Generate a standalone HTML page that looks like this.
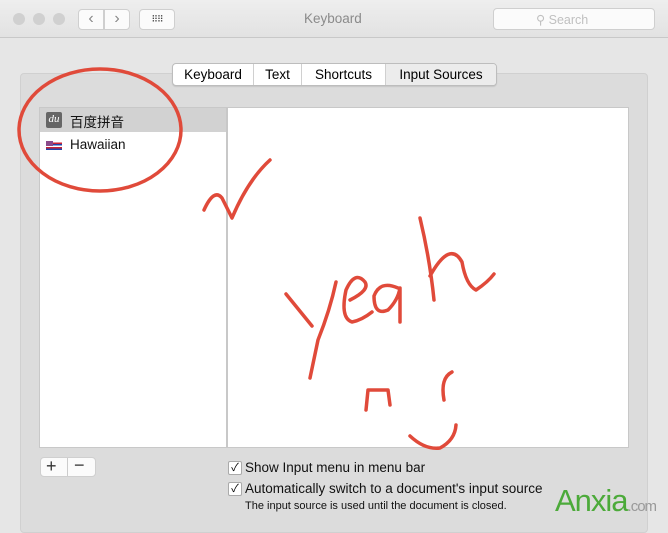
<!DOCTYPE html>
<html><head><meta charset="utf-8"><style>
body{margin:0;width:668px;height:521px;overflow:hidden;background:#e6e6e6;font-family:"Liberation Sans","Noto Sans CJK SC",sans-serif;position:relative}
.tb{position:absolute;left:0;top:0;width:668px;height:37px;background:linear-gradient(#eeeeee,#e2e2e2);border-bottom:1px solid #c8c8c8}
.dot{position:absolute;top:13px;width:12px;height:12px;border-radius:50%;background:#d0d0d0}
.btn{position:absolute;background:#fbfbfb;border:1px solid #cfcfcf;border-radius:4px;box-sizing:border-box}
.panel{position:absolute;left:20px;top:73px;width:628px;height:460px;background:#dcdcdc;border:1px solid #d0d0d0;border-radius:4px;box-sizing:border-box}
.tabs{position:absolute;left:172px;top:63px;height:21px;display:flex;border:1px solid #bdbdbd;border-radius:4px;background:#fff;font-size:13.5px;overflow:hidden;box-shadow:0 1px 1px rgba(0,0,0,.1)}
.tabs div{padding:2px 0 0;border-right:1px solid #d0d0d0;line-height:17px;text-align:center}
.list{position:absolute;left:39px;top:107px;width:188px;height:341px;background:#fff;border:1px solid #c8c8c8;box-sizing:border-box}
.right{position:absolute;left:227px;top:107px;width:402px;height:341px;background:#fff;border:1px solid #c8c8c8;box-sizing:border-box}
.t{position:absolute;font-size:13.5px;color:#111;white-space:nowrap}
.cb{position:absolute;width:12px;height:12px;background:#fff;border:1px solid #aaa;border-radius:2px;font-size:11px;line-height:12px;text-align:center}
</style></head><body>
<div class="tb"></div>
<div class="dot" style="left:13px"></div><div class="dot" style="left:33px"></div><div class="dot" style="left:53px"></div>
<div class="btn" style="left:78px;top:9px;width:26px;height:21px;border-radius:4px 0 0 4px;color:#888;text-align:center;font-size:16px;line-height:18px">‹</div>
<div class="btn" style="left:104px;top:9px;width:26px;height:21px;border-radius:0 4px 4px 0;color:#888;text-align:center;font-size:16px;line-height:18px">›</div>
<div class="btn" style="left:139px;top:9px;width:36px;height:21px;text-align:center;font-size:9px;line-height:19px;color:#444;letter-spacing:-1px">⠿⠿</div>
<div class="t" style="left:304px;top:11px;color:#8a8a8a;font-size:13.5px">Keyboard</div>
<div class="btn" style="left:493px;top:8px;width:162px;height:22px;border-radius:4px"></div>
<div class="t" style="left:536px;top:12px;color:#c0c0c0;font-size:12.5px">⚲ Search</div>
<div class="panel"></div>
<div class="tabs"><div style="width:80px">Keyboard</div><div style="width:47px">Text</div><div style="width:83px">Shortcuts</div><div style="width:110px;background:#ececec;border:none">Input Sources</div></div>
<div class="list"><div style="height:24px;background:#d2d2d2"></div></div>
<div style="position:absolute;left:46px;top:112px;width:16px;height:16px;background:#666;border-radius:2px;color:#fff;font:italic 11px 'Liberation Serif',serif;text-align:center;line-height:15px">du</div>
<div class="t" style="left:70px;top:111px">百度拼音</div>
<div style="position:absolute;left:46px;top:141px;width:16px;height:10px;background:repeating-linear-gradient(#fff 0 1.5px,#c23 1.5px 3px,#24a 3px 4.5px)"></div>
<div style="position:absolute;left:46px;top:141px;width:7px;height:5px;background:#8a4a8a"></div>
<div class="t" style="left:70px;top:137px">Hawaiian</div>
<div class="right"></div>
<div class="btn" style="left:40px;top:457px;width:56px;height:20px;border-radius:4px"></div>
<div style="position:absolute;left:67px;top:458px;width:1px;height:18px;background:#ccc"></div>
<div class="t" style="left:46px;top:456px;font-size:18px;color:#333">+</div>
<div class="t" style="left:74px;top:455px;font-size:18px;color:#333">−</div>
<div class="cb" style="left:228px;top:461px">✓</div>
<div class="t" style="left:245px;top:460px">Show Input menu in menu bar</div>
<div class="cb" style="left:228px;top:482px">✓</div>
<div class="t" style="left:245px;top:481px">Automatically switch to a document's input source</div>
<div class="t" style="left:245px;top:500px;font-size:11px">The input source is used until the document is closed.</div>
<div class="t" style="left:555px;top:483px;font-size:31px;color:#4caa3a;letter-spacing:-1px">Anxia<span style="font-size:15px;color:#999">.com</span></div>
<svg style="position:absolute;left:0;top:0" width="668" height="521" fill="none" stroke="#e04a3a" stroke-width="3.5" stroke-linecap="round" stroke-linejoin="round">
<ellipse cx="100" cy="130" rx="81" ry="61"/>
<path d="M204 210 Q214 188 222 198 L232 218 Q248 180 270 160"/>
<path d="M286 294 L312 326 M336 282 Q330 310 318 340 L310 378"/>
<path d="M350 300 Q370 290 365 282 Q355 270 346 290 Q340 318 352 322 Q362 320 372 312"/>
<path d="M398 288 Q380 280 374 296 Q374 316 388 310 Q398 300 400 288 L400 322"/>
<path d="M420 218 Q430 260 434 300 M430 276 Q450 240 462 262 Q466 285 476 290 Q488 282 494 274"/>
<path d="M366 410 L368 390 L388 390 L390 405 M444 400 Q440 378 452 372 M410 436 Q425 450 440 448 Q455 440 456 425"/>
</svg>
</body></html>
